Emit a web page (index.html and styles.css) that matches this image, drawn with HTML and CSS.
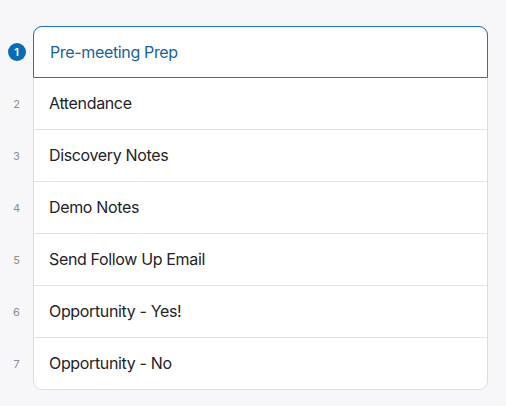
FILE: index.html
```html
<!DOCTYPE html>
<html>
<head>
<meta charset="utf-8">
<link rel="stylesheet" href="styles.css">
</head>
<body>
<div class="steps">
  <div class="numbers">
    <div class="num"><span class="badge">1</span></div>
    <div class="num">2</div>
    <div class="num">3</div>
    <div class="num">4</div>
    <div class="num">5</div>
    <div class="num">6</div>
    <div class="num">7</div>
  </div>
  <div class="card">
    <div class="row active">Pre-meeting Prep</div>
    <div class="row">Attendance</div>
    <div class="row">Discovery Notes</div>
    <div class="row">Demo Notes</div>
    <div class="row">Send Follow Up Email</div>
    <div class="row">Opportunity - Yes!</div>
    <div class="row last">Opportunity - No</div>
  </div>
</div>
</body>
</html>
```
FILE: styles.css
```css
html, body {
  margin: 0;
  padding: 0;
  background: #f7f7fa;
  font-family: "Inter", "Liberation Sans", sans-serif;
}
.steps {
  display: flex;
  padding: 26px 0 0 0;
}
.numbers {
  width: 33px;
  display: flex;
  flex-direction: column;
}
.num {
  height: 52px;
  display: flex;
  align-items: center;
  justify-content: center;
  font-size: 11px;
  color: #8a8d93;
}
.badge {
  width: 18px;
  height: 18px;
  border-radius: 50%;
  background: #0b6bb5;
  color: #fff;
  font-size: 11px;
  font-weight: 600;
  display: flex;
  align-items: center;
  justify-content: center;
}
.card {
  width: 455px;
  box-sizing: border-box;
  background: #fff;
  border: 1px solid #dcdde2;
  border-radius: 9px;
  display: flex;
  flex-direction: column;
}
.row {
  height: 52px;
  box-sizing: border-box;
  display: flex;
  align-items: center;
  padding-left: 15px;
  padding-bottom: 1px;
  font-size: 16px;
  letter-spacing: -0.35px;
  color: #1f2328;
  border-bottom: 1px solid #e2e3e7;
}
.row.last {
  height: 50px;
  border-bottom: none;
}
.row.active {
  color: #1a5f9c;
  border: 1px solid #1b74bd;
  margin: -1px -1px 0 -1px;
  padding-left: 16px;
  border-radius: 9px 9px 0 0;
}
```
